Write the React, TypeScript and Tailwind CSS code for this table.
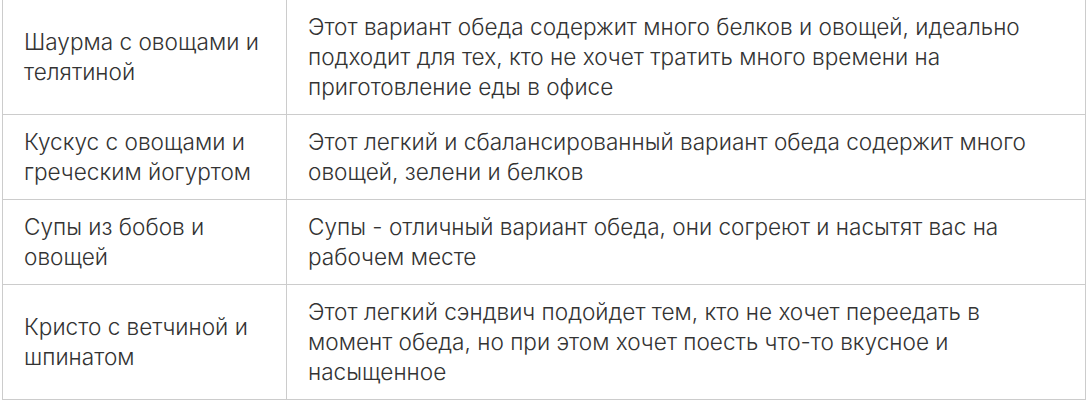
const rows = [
  {
    name: 'Шаурма с овощами и телятиной',
    text: 'Этот вариант обеда содержит много белков и овощей, идеально подходит для тех, кто не хочет тратить много времени на приготовление еды в офисе',
  },
  {
    name: 'Кускус с овощами и греческим йогуртом',
    text: 'Этот легкий и сбалансированный вариант обеда содержит много овощей, зелени и белков',
  },
  {
    name: 'Супы из бобов и овощей',
    text: 'Супы - отличный вариант обеда, они согреют и насытят вас на рабочем месте',
  },
  {
    name: 'Кристо с ветчиной и шпинатом',
    text: 'Этот легкий сэндвич подойдет тем, кто не хочет переедать в момент обеда, но при этом хочет поесть что-то вкусное и насыщенное',
  },
];

export default function App() {
  return (
    <div className="bg-white min-h-[400px] pl-[2px] font-['Inter',sans-serif] font-light text-[22.6px] leading-[30px] text-[#333]">
      <table className="w-[1084px] border-collapse">
        <tbody>
          {rows.map((r) => (
            <tr key={r.name}>
              <td className="w-[284px] border-x border-b border-[#cccccc] px-[21px] py-[12px] align-middle">
                {r.name}
              </td>
              <td className="border-x border-b border-[#cccccc] pl-[21px] pr-[30px] py-[12px] align-middle">
                {r.text}
              </td>
            </tr>
          ))}
        </tbody>
      </table>
    </div>
  );
}
